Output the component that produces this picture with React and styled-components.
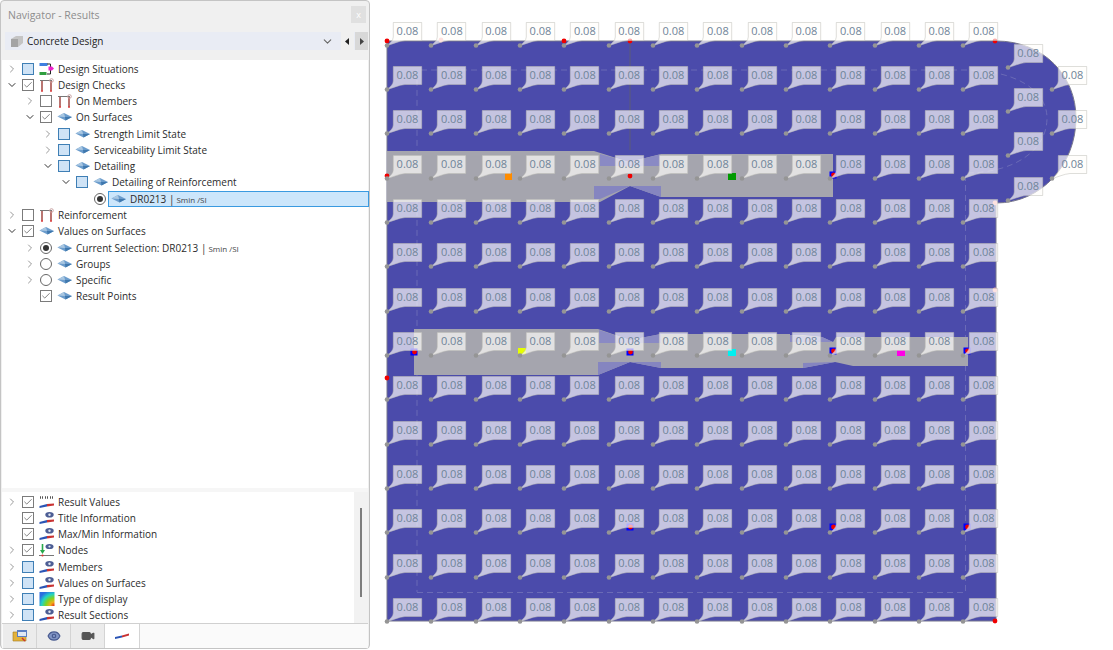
import React from 'react';
import styled, { createGlobalStyle } from 'styled-components';
import { ChevronRight, ChevronDown, Check, Eye, Video } from 'lucide-react';

const Global = createGlobalStyle`
html, body {
  margin: 0;
  padding: 0;
  background: #fff;
  overflow: hidden;
}
`

const Page = styled.div`
display: flex;
width: 1113px;
height: 650px;
font-family: "Open Sans", "Noto Sans", sans-serif;
background: #fff;
`

const Panel = styled.div`
display: flex;
flex-direction: column;
box-sizing: border-box;
flex: none;
width: 370px;
height: 649px;
background: #f0f0f0;
border: 1px solid #c4c4c4;
border-radius: 4px;
padding: 0 1px 0 1px;
`

const TitleBar = styled.div`
display: flex;
align-items: center;
justify-content: space-between;
flex: none;
height: 27px;
padding: 0 2px 0 6px;
color: #8d8d8d;
font-size: 10.5px;
`

const CloseBtn = styled.div`
display: flex;
align-items: center;
justify-content: center;
width: 15px;
height: 17px;
background: #e0e0e0;
color: #fff;
font-size: 9px;
`

const Picker = styled.div`
display: flex;
align-items: center;
flex: none;
height: 18px;
margin: 4px 0 0 3px;
background: #e9ecf4;
color: #222;
font-size: 10px;
`

const PickerLogo = styled.svg`
flex: none;
margin-left: 5px;
`

const PickerLabel = styled.span`
flex: 1;
margin-left: 3px;
`

const PickerChevron = styled(ChevronDown)`
margin-right: 6px;
`

const PickerArrow = styled.div`
display: flex;
align-items: center;
justify-content: center;
width: 13px;
height: 18px;
margin-left: 1px;
background: ${p => p.$active ? '#d8d8d8' : '#f0f0f0'};
`

const TreeBox = styled.div`
flex: 1;
margin-top: 10px;
padding-top: 0.5px;
background: #fff;
`

const Row = styled.div`
display: flex;
align-items: center;
box-sizing: border-box;
height: ${p => p.$compact ? 16.15 : 16.28}px;
padding-left: ${p => p.$depth * 18 + 3}px;
color: #2b2b2b;
font-size: 10px;
white-space: nowrap;
`

const Toggle = styled.span`
display: flex;
align-items: center;
justify-content: center;
flex: none;
width: 13px;
color: ${p => p.$open ? '#333' : '#999'};
`

const CheckBox = styled.span`
display: flex;
align-items: center;
justify-content: center;
flex: none;
box-sizing: border-box;
width: 12px;
height: 12px;
margin: 0 5px 0 4px;
border: 1px solid ${p => p.$mixed ? '#3f7fb5' : '#7b7b7b'};
background: ${p => p.$mixed ? '#cfe3f6' : '#fff'};
color: #444;
`

const Radio = styled.span`
display: flex;
align-items: center;
justify-content: center;
flex: none;
box-sizing: border-box;
width: 12px;
height: 12px;
margin: 0 5px 0 4px;
border: 1px solid #666;
border-radius: 50%;
background: #fff;
&::after {
  content: '';
  display: ${p => p.$on ? 'block' : 'none'};
  width: 6px;
  height: 6px;
  border-radius: 50%;
  background: #333;
}
`

const IconSlot = styled.span`
display: flex;
flex: none;
width: 16px;
height: 14px;
margin-right: 3px;
`

const Selected = styled.span`
display: flex;
align-items: center;
flex: 1;
align-self: stretch;
margin: 0 -1px 0 -3px;
padding-left: 2px;
box-sizing: border-box;
background: #cce6fb;
border: 1px solid #3a9ae0;
`

const Sub = styled.span`
margin: 2px 0 0 2px;
font-size: 8px;
color: #444;
`

const Gutter = styled.div`
flex: none;
height: 4px;
background: #f6f6f6;
`

const Lower = styled.div`
display: flex;
flex: none;
height: 131px;
background: #fff;
`

const LowerList = styled.div`
flex: 1;
padding-top: 2px;
`

const ScrollTrack = styled.div`
flex: none;
position: relative;
width: 14px;
background: #f2f2f2;
`

const ScrollThumb = styled.div`
position: absolute;
top: 16px;
left: 6px;
width: 2px;
height: 89px;
background: #7d7d7d;
`

const TabBar = styled.div`
display: flex;
flex: none;
height: 24px;
padding-left: 1px;
background: #fafafa;
border-top: 1px solid #d0d0d0;
`

const Tab = styled.div`
display: flex;
align-items: center;
justify-content: center;
box-sizing: border-box;
width: ${p => p.$active ? 35 : 34}px;
background: ${p => p.$active ? '#fff' : '#ececec'};
border-right: 1px solid #d4d4d4;
`

const Canvas = styled.div`
position: relative;
flex: 1;
height: 650px;
`

const PlateSvg = styled.svg`
position: absolute;
left: 0;
top: 0;
`

const Bubble = styled.div`
position: absolute;
width: 40px;
height: 28px;
`

const BubbleSvg = styled.svg`
position: absolute;
left: 0;
top: 0;
overflow: visible;
`

const BubbleText = styled.span`
position: absolute;
left: 6px;
top: 0;
width: 29px;
height: 18px;
line-height: 18px;
text-align: center;
color: #6f8499;
font-size: 11px;
`

const Surface = () => (
  <svg width="16" height="14" viewBox="0 0 16 14">
    <path d="M0.5 6.5 L7 3 L15 7 L8.5 10.5 Z" fill="#6b9ccc" />
    <path d="M0.5 6.5 L7 3 L8 7 Z" fill="#a9c7e2" />
    <path d="M8 7 L15 7 L8.5 10.5 Z" fill="#3f78ae" />
  </svg>
)

const Frame = () => (
  <svg width="16" height="14" viewBox="0 0 16 14">
    <path d="M3 13 V3 M12 13 V3" fill="none" stroke="#a8544f" strokeWidth="1.6" />
    <path d="M1 2.5 H13" stroke="#777" strokeWidth="1" />
    <circle cx="12.5" cy="2.5" r="1.8" fill="none" stroke="#c9a3a3" />
    <circle cx="3" cy="13" r="1" fill="#d44" />
    <circle cx="12" cy="13" r="1" fill="#d44" />
  </svg>
)

const Situations = () => (
  <svg width="16" height="14" viewBox="0 0 16 14">
    <rect x="0.5" y="1" width="8" height="3" fill="#3f7fe0" />
    <rect x="0.5" y="10" width="7" height="3" fill="#2f9e3f" />
    <path d="M8 2 H11.5 V12 H8" fill="none" stroke="#222" />
    <path d="M9.5 4.5 H13 L15 6.5 L13 8.5 H9.5 Z" fill="#ee22cc" />
  </svg>
)

const ResultEye = () => (
  <svg width="16" height="14" viewBox="0 0 16 14">
    <path d="M0.5 13 V11 L8 9 V11.5 Z" fill="#2b55b5" />
    <path d="M8 9 L15 8.5 V10.5 L8 11.5 Z" fill="#c93333" />
    <ellipse cx="10.5" cy="3.8" rx="4.2" ry="2.8" fill="#4c5d94" />
    <circle cx="10.5" cy="3.8" r="1.2" fill="#dfe6f2" />
  </svg>
)

const ResultXxx = () => (
  <svg width="16" height="14" viewBox="0 0 16 14">
    <path d="M1 2.5 h3 M6 2.5 h3 M11 2.5 h3" stroke="#555" strokeWidth="2.4" strokeDasharray="1 1" />
    <path d="M0.5 13 V11 L8 9 V11.5 Z" fill="#2b55b5" />
    <path d="M8 9 L15 8.5 V10.5 L8 11.5 Z" fill="#c93333" />
  </svg>
)

const NodeEye = () => (
  <svg width="16" height="14" viewBox="0 0 16 14">
    <path d="M3.5 1 V9" stroke="#27a84a" strokeWidth="1.6" />
    <path d="M1 7 L3.5 11 L6 7 Z" fill="#27a84a" />
    <path d="M0 12.5 H15" stroke="#777" />
    <circle cx="3.5" cy="12.5" r="1.1" fill="#d33" />
    <ellipse cx="10.5" cy="3.5" rx="4" ry="2.6" fill="#4c5d94" />
    <circle cx="10.5" cy="3.5" r="1.1" fill="#dfe6f2" />
  </svg>
)

const Rainbow = () => (
  <svg width="16" height="14" viewBox="0 0 16 14">
    <defs>
      <radialGradient id="rb" cx="1" cy="1" r="1.15">
        <stop offset="0" stopColor="#e2231a" />
        <stop offset="0.25" stopColor="#f0b01a" />
        <stop offset="0.5" stopColor="#7ed321" />
        <stop offset="0.75" stopColor="#22d3c5" />
        <stop offset="1" stopColor="#2b6de0" />
      </radialGradient>
    </defs>
    <rect x="0.5" y="0" width="15" height="14" fill="url(#rb)" />
  </svg>
)

const ICONS = {
  surface: Surface,
  frame: Frame,
  situations: Situations,
  eye: ResultEye,
  xxx: ResultXxx,
  node: NodeEye,
  rainbow: Rainbow
}

const upperRows = [
  { d: 0, t: 'closed', c: 'mixed', i: 'situations', text: 'Design Situations' },
  { d: 0, t: 'open', c: 'on', i: 'frame', text: 'Design Checks' },
  { d: 1, t: 'closed', c: 'off', i: 'frame', text: 'On Members' },
  { d: 1, t: 'open', c: 'on', i: 'surface', text: 'On Surfaces' },
  { d: 2, t: 'closed', c: 'mixed', i: 'surface', text: 'Strength Limit State' },
  { d: 2, t: 'closed', c: 'mixed', i: 'surface', text: 'Serviceability Limit State' },
  { d: 2, t: 'open', c: 'mixed', i: 'surface', text: 'Detailing' },
  { d: 3, t: 'open', c: 'mixed', i: 'surface', text: 'Detailing of Reinforcement' },
  { d: 4, c: 'radioOn', i: 'surface', selected: true, text: 'DR0213 |', sub: 'Smin /SI' },
  { d: 0, t: 'closed', c: 'off', i: 'frame', text: 'Reinforcement' },
  { d: 0, t: 'open', c: 'on', i: 'surface', text: 'Values on Surfaces' },
  { d: 1, t: 'closed', c: 'radioOn', i: 'surface', text: 'Current Selection: DR0213 |', sub: 'Smin /SI' },
  { d: 1, t: 'closed', c: 'radioOff', i: 'surface', text: 'Groups' },
  { d: 1, t: 'closed', c: 'radioOff', i: 'surface', text: 'Specific' },
  { d: 1, c: 'on', i: 'surface', text: 'Result Points' }
]

const lowerRows = [
  { d: 0, t: 'closed', c: 'on', i: 'xxx', text: 'Result Values' },
  { d: 0, c: 'on', i: 'eye', text: 'Title Information' },
  { d: 0, c: 'on', i: 'eye', text: 'Max/Min Information' },
  { d: 0, t: 'closed', c: 'on', i: 'node', text: 'Nodes' },
  { d: 0, t: 'closed', c: 'mixed', i: 'eye', text: 'Members' },
  { d: 0, t: 'closed', c: 'mixed', i: 'eye', text: 'Values on Surfaces' },
  { d: 0, t: 'closed', c: 'mixed', i: 'rainbow', text: 'Type of display' },
  { d: 0, t: 'closed', c: 'mixed', i: 'eye', text: 'Result Sections' }
]

const Mark = ({ c }) => {
  if (c === 'radioOn') return <Radio $on />
  if (c === 'radioOff') return <Radio />
  return (
    <CheckBox $mixed={c === 'mixed'}>
      {c === 'on' && <Check size={10} strokeWidth={1.6} />}
    </CheckBox>
  )
}

const TreeRow = ({ row, compact }) => {
  const Icon = ICONS[row.i]
  const body = (
    <>
      <IconSlot><Icon /></IconSlot>
      <span>{row.text}</span>
      {row.sub && <Sub>{row.sub}</Sub>}
    </>
  )
  return (
    <Row $depth={row.d} $compact={compact}>
      <Toggle $open={row.t === 'open'}>
        {row.t === 'open' && <ChevronDown size={12} strokeWidth={2} />}
        {row.t === 'closed' && <ChevronRight size={12} strokeWidth={2} />}
      </Toggle>
      <Mark c={row.c} />
      {row.selected ? <Selected>{body}</Selected> : body}
    </Row>
  )
}

// grid of result points on the plate, offsets are canvas pixels
const PITCH_X = 44.33
const PITCH_Y = 44.36
const ORIGIN_X = 17
const ORIGIN_Y = 45

const points = []
for (let r = 0; r < 14; r++) {
  for (let c = 0; c < 14; c++) {
    points.push({ x: ORIGIN_X + c * PITCH_X, y: ORIGIN_Y + r * PITCH_Y })
  }
}
// the rounded end has two staggered columns
for (let r = 0; r < 4; r++) {
  points.push({ x: ORIGIN_X + 14 * PITCH_X, y: ORIGIN_Y + (r + 0.5) * PITCH_Y })
}
for (let r = 1; r < 4; r++) {
  points.push({ x: ORIGIN_X + 15 * PITCH_X, y: ORIGIN_Y + r * PITCH_Y })
}

const ResultLabel = ({ x, y }) => (
  <Bubble style={{ left: x, top: y - 23.5 }}>
    <BubbleSvg width="40" height="28" viewBox="0 0 40 28">
      <path
        d="M6.3 0.5 H34.7 V18.5 H18 C12 19 6 22 0 23.5 C3 21 6 19 6.3 15 Z"
        fill="#fffdfa"
        fillOpacity="0.68"
        stroke="#bdbdb8"
        strokeOpacity="0.5"
      />
      <circle cx="0" cy="23.5" r="2.3" fill="#959595" />
    </BubbleSvg>
    <BubbleText>0.08</BubbleText>
  </Bubble>
)

const Dot = ({ x, y, pink }) => <circle cx={x} cy={y} r="2.4" fill={pink ? '#f7a9a9' : '#f00000'} />

const Support = ({ x, y }) => (
  <g>
    <rect x={x - 3.5} y={y - 3.5} width="7" height="7" fill="#0000ff" />
    <circle cx={x + 0.5} cy={y} r="2.4" fill="#f00000" />
  </g>
)

const Plate = () => (
  <PlateSvg width="743" height="650" viewBox="370 0 743 650">
    <path
      d="M387 41 H996 C1044 41 1076 76 1076 118 C1076 164 1042 203 996 203 V621 H387 Z"
      fill="#4b4bab"
      stroke="#77778c"
      strokeWidth="1"
    />
    <path
      d="M417 592.5 H965.5 V173 C1015 173 1047 150 1047 118 C1047 90 1015 70 965 70 H417 V592"
      fill="none"
      stroke="#6a6ab6"
      strokeWidth="1"
      strokeDasharray="6 4"
    />
    <path d="M630 41 V150" stroke="#5c5c78" strokeWidth="1" />

    <path d="M387 151 H594 L629 162 L661 154 H833 V197 H661 L630 186 L600 202 H387 Z" fill="#a5a5ae" />
    <path d="M600 154 L629 162 L660 154.5 V166 H600 Z" fill="#8a8ac4" />
    <path d="M594 186 H661 V197 L630 186 L600 199 H594 Z" fill="#8585c0" />

    <path d="M414 329 H598 L630 340 L661 334 H790 V335 H803 L822 337 L833 342 L836 337 H968 V366 H853 L835 362 L803 368 H661 L630 362 L598 375 H414 Z" fill="#a5a5ae" />
    <path d="M599 330 L630 340 L661 334 V343 H599 Z" fill="#8a8ac4" />
    <path d="M598 362 H661 V368 L630 362 L598 375 Z" fill="#8585c0" />
    <path d="M790 335 L822 337 L833 342 H790 Z" fill="#8a8ac4" />
    <path d="M803 363 L835 362 L803 368 Z" fill="#8585c0" />

    <Dot x={387} y={41} />
    <Dot x={441} y={40} pink />
    <Dot x={564} y={41} />
    <Dot x={630} y={41} />
    <Dot x={995} y={41} />
    <Dot x={995} y={203} pink />
    <Dot x={995} y={290} pink />
    <Dot x={387} y={176} />
    <Dot x={387} y={378} />
    <Dot x={995} y={621} />
    <Dot x={630} y={176} />

    <rect x="505" y="173" width="7" height="7" fill="#ff8c00" />
    <rect x="728" y="173" width="8" height="7" fill="#009a00" />
    <rect x="518" y="348" width="8" height="6" fill="#e6ff00" />
    <rect x="728" y="349" width="8" height="7" fill="#00f0f0" />
    <rect x="897" y="350" width="8" height="6" fill="#ff00e6" />
    <Support x={833} y={175} />
    <Support x={414} y={352} />
    <Support x={630} y={352} />
    <Support x={833} y={351} />
    <Support x={967} y={351} />
    <Support x={630} y={527} />
    <Support x={833} y={527} />
    <Support x={967} y={527} />
  </PlateSvg>
)

function App() {
  return (
    <Page>
      <Global />
      <Panel>
        <TitleBar>
          Navigator - Results
          <CloseBtn>x</CloseBtn>
        </TitleBar>
        <Picker>
          <PickerLogo width="14" height="14" viewBox="0 0 14 14">
            <path d="M1 5 L6 2 L13 2 L13 9 L8 13 L1 13 Z" fill="#c4c4c4" />
            <path d="M1 5 L8 5 L8 13 L1 13 Z" fill="#a4a4a4" />
          </PickerLogo>
          <PickerLabel>Concrete Design</PickerLabel>
          <PickerChevron size={13} color="#666" />
          <PickerArrow>
            <svg width="5" height="7" viewBox="0 0 5 7"><path d="M4 0 V7 L0 3.5 Z" fill="#222" /></svg>
          </PickerArrow>
          <PickerArrow $active>
            <svg width="5" height="7" viewBox="0 0 5 7"><path d="M1 0 V7 L5 3.5 Z" fill="#444" /></svg>
          </PickerArrow>
        </Picker>
        <TreeBox>
          {upperRows.map((row, i) => <TreeRow key={i} row={row} />)}
        </TreeBox>
        <Gutter />
        <Lower>
          <LowerList>
            {lowerRows.map((row, i) => <TreeRow key={i} row={row} compact />)}
          </LowerList>
          <ScrollTrack><ScrollThumb /></ScrollTrack>
        </Lower>
        <TabBar>
          <Tab>
            <svg width="16" height="14" viewBox="0 0 16 14">
              <path d="M1 3 H6 L7 5 H14 V12 H1 Z" fill="#e3b23c" stroke="#a57b1c" strokeWidth="0.6" />
              <rect x="5" y="1" width="10" height="7" fill="#5b7fc4" />
              <rect x="6" y="3" width="8" height="4" fill="#dfe8f5" />
              <path d="M10 9 l3 3" stroke="#c33" strokeWidth="1.5" />
            </svg>
          </Tab>
          <Tab><Eye size={14} color="#47598f" fill="#8094c4" /></Tab>
          <Tab><Video size={14} color="#555" fill="#555" /></Tab>
          <Tab $active>
            <svg width="16" height="8" viewBox="0 0 16 8">
              <path d="M1 7 V5 L8 3.5 V5.5 Z" fill="#2b55b5" />
              <path d="M8 3.5 L15 1.5 V3.5 L8 5.5 Z" fill="#c93333" />
            </svg>
          </Tab>
        </TabBar>
      </Panel>
      <Canvas>
        <Plate />
        {points.map((p, i) => <ResultLabel key={i} x={p.x} y={p.y} />)}
      </Canvas>
    </Page>
  )
}

export default App;
